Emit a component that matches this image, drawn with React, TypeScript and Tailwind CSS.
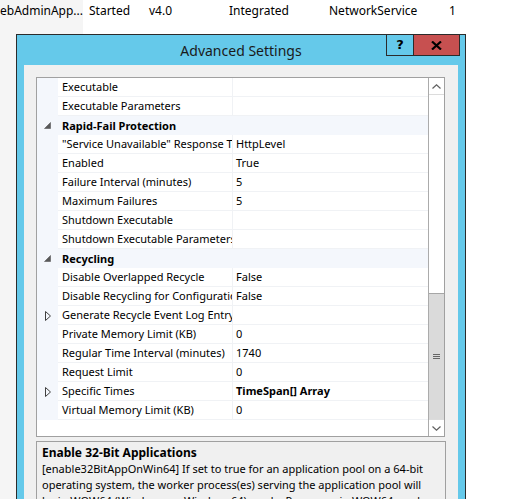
import React from 'react';

type Row = {
  label: string;
  value?: string;
  kind?: 'cat' | 'collapsed';
  bold?: boolean;
};

const rows: Row[] = [
  { label: 'Executable' },
  { label: 'Executable Parameters' },
  { label: 'Rapid-Fail Protection', kind: 'cat' },
  { label: '"Service Unavailable" Response Type', value: 'HttpLevel' },
  { label: 'Enabled', value: 'True' },
  { label: 'Failure Interval (minutes)', value: '5' },
  { label: 'Maximum Failures', value: '5' },
  { label: 'Shutdown Executable' },
  { label: 'Shutdown Executable Parameters' },
  { label: 'Recycling', kind: 'cat' },
  { label: 'Disable Overlapped Recycle', value: 'False' },
  { label: 'Disable Recycling for Configuration Changes', value: 'False' },
  { label: 'Generate Recycle Event Log Entry', kind: 'collapsed' },
  { label: 'Private Memory Limit (KB)', value: '0' },
  { label: 'Regular Time Interval (minutes)', value: '1740' },
  { label: 'Request Limit', value: '0' },
  { label: 'Specific Times', value: 'TimeSpan[] Array', kind: 'collapsed', bold: true },
  { label: 'Virtual Memory Limit (KB)', value: '0' },
];

const Expanded = () => (
  <svg width="7" height="7" viewBox="0 0 7 7">
    <path d="M6.5 0.5 L6.5 6.5 L0.5 6.5 Z" fill="#595959" stroke="#595959" strokeWidth="0.6" />
  </svg>
);

const Collapsed = () => (
  <svg width="6" height="10" viewBox="0 0 6 10">
    <path d="M0.5 0.5 L5.5 5 L0.5 9.5 Z" fill="none" stroke="#404040" strokeWidth="1" />
  </svg>
);

const GridRow = ({ row }: { row: Row }) => {
  if (row.kind === 'cat') {
    return (
      <div className="flex h-[19px] bg-[#f4f7fc]">
        <div className="w-[21px] flex items-center justify-center">
          <Expanded />
        </div>
        <div className="flex-1 flex items-center pl-[4px] pt-[1px] font-bold text-black">{row.label}</div>
      </div>
    );
  }
  return (
    <div className="flex h-[19px]">
      <div className="w-[21px] shrink-0 bg-[#f4f7fc] flex items-center justify-center">
        {row.kind === 'collapsed' && <Collapsed />}
      </div>
      <div className="w-[175px] shrink-0 border-b border-r border-[#f0f2f5] pl-[4px] pt-[1px] flex items-center overflow-hidden whitespace-nowrap">
        {row.label}
      </div>
      <div
        className={`flex-1 border-b border-[#f0f2f5] pl-[3px] pt-[1px] flex items-center whitespace-nowrap overflow-hidden ${
          row.bold ? 'font-bold' : ''
        }`}
      >
        {row.value}
      </div>
    </div>
  );
};

const Chevron = ({ up }: { up?: boolean }) => (
  <svg width="9" height="5" viewBox="0 0 9 5">
    <path
      d={up ? 'M0.5 4.5 L4.5 0.8 L8.5 4.5' : 'M0.5 0.5 L4.5 4.2 L8.5 0.5'}
      fill="none"
      stroke="#606060"
      strokeWidth="1.2"
    />
  </svg>
);

const Scrollbar = () => (
  <div className="w-[16px] border-l border-[#ababab] flex flex-col bg-white">
    <div className="h-[17px] border-b border-[#dcdcdc] flex items-center justify-center">
      <Chevron up />
    </div>
    <div className="h-[198px]" />
    <div className="h-[126px] bg-[#dadada] border-t border-[#a6a6a6] flex items-center justify-center">
      <svg width="7" height="6" viewBox="0 0 7 6">
        <path d="M0 0.5 H7 M0 2.5 H7 M0 4.5 H7" stroke="#666" strokeWidth="1" />
      </svg>
    </div>
    <div className="flex-1 border-t border-[#dcdcdc] flex items-center justify-center">
      <Chevron />
    </div>
  </div>
);

const Dialog = () => (
  <div className="absolute left-[16px] top-[34px] w-[450px] h-[480px] border border-[#2b2b2b] bg-[#65c9ea] px-[7px] pt-[30px]">
    <div className="absolute top-[-1px] right-[5px] flex h-[22px] border border-[#2b2b2b]">
      <div className="w-[27px] border-r border-[#2b2b2b] flex items-center justify-center text-black text-[13px] font-bold font-['DejaVu_Sans',sans-serif]">
        ?
      </div>
      <div className="w-[45px] bg-[#c75050] flex items-center justify-center">
        <svg width="11" height="9" viewBox="0 0 11 9">
          <path d="M1 0.5 L10 8.5 M10 0.5 L1 8.5" stroke="#000" strokeWidth="2.2" />
        </svg>
      </div>
    </div>
    <div className="absolute top-[5px] left-0 right-0 text-center text-[14px] text-[#1a1a1a]">Advanced Settings</div>

    <div className="bg-[#f0f0f0] h-full pt-[12px] pl-[12px] pr-[13px]">
      <div className="h-[360px] border border-[#a0a0a0] bg-white flex">
        <div className="flex-1 flex flex-col">
          {rows.map((r, i) => (
            <GridRow key={i} row={r} />
          ))}
          <div className="flex-1" />
        </div>
        <Scrollbar />
      </div>
      <div className="mt-[4px] w-[410px] h-[100px] border border-[#a0a0a0] bg-[#f0f0f0] pl-[5px] pr-[9px] pt-[2px]">
        <div className="font-bold text-black text-[12px]">Enable 32-Bit Applications</div>
        <div className="leading-[16px] text-black mt-[-1px]">
          [enable32BitAppOnWin64] If set to true for an application pool on a 64-bit operating system, the
          worker process(es) serving the application pool will be in WOW64 (Windows on Windows64) mode.
          Processes in WOW64 mode are 32-bit processes that load only 32-bit applications.
        </div>
      </div>
    </div>
  </div>
);

export default function App() {
  return (
    <div className="relative w-[520px] h-[499px] overflow-hidden bg-white font-['Noto_Sans',sans-serif] text-[11px] text-black">
      <div className="absolute left-0 top-0 bottom-0 w-[83px] bg-[#f5f5f5]" />
      <div className="relative flex h-[22px] items-center whitespace-nowrap text-[12px]">
        <div className="w-[89px] overflow-hidden flex justify-end pr-[6px]">ebAdminApp...</div>
        <div className="w-[60px]">Started</div>
        <div className="w-[80px]">v4.0</div>
        <div className="w-[100px]">Integrated</div>
        <div className="w-[120px]">NetworkService</div>
        <div>1</div>
      </div>
      <Dialog />
    </div>
  );
}
